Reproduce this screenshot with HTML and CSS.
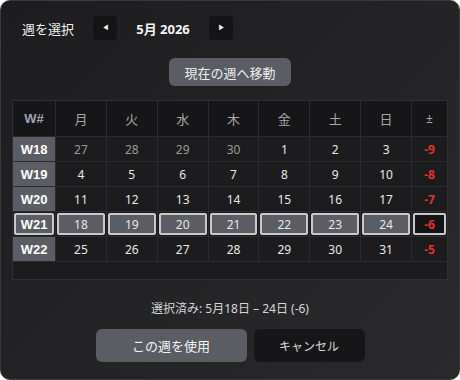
FILE: index.html
```html
<!DOCTYPE html>
<html lang="ja">
<head>
    <meta charset="UTF-8">
    <title>週を選択</title>
    <link rel="stylesheet" href="styles.css">
</head>
<body>
    <div class="panel">
        <div class="header">
            <span class="title">週を選択</span>
            <button class="nav-btn">&#9664;</button>
            <span class="month">5月 2026</span>
            <button class="nav-btn">&#9654;</button>
        </div>

        <button class="today-btn">現在の週へ移動</button>

        <div class="calendar">
            <div class="grid">
                <div class="cell head wk">W#</div>
                <div class="cell head">月</div>
                <div class="cell head">火</div>
                <div class="cell head">水</div>
                <div class="cell head">木</div>
                <div class="cell head">金</div>
                <div class="cell head">土</div>
                <div class="cell head">日</div>
                <div class="cell head pm">±</div>

                <div class="cell label">W18</div>
                <div class="cell muted">27</div>
                <div class="cell muted">28</div>
                <div class="cell muted">29</div>
                <div class="cell muted">30</div>
                <div class="cell">1</div>
                <div class="cell">2</div>
                <div class="cell">3</div>
                <div class="cell diff">-9</div>

                <div class="cell label">W19</div>
                <div class="cell">4</div>
                <div class="cell">5</div>
                <div class="cell">6</div>
                <div class="cell">7</div>
                <div class="cell">8</div>
                <div class="cell">9</div>
                <div class="cell">10</div>
                <div class="cell diff">-8</div>

                <div class="cell label">W20</div>
                <div class="cell">11</div>
                <div class="cell">12</div>
                <div class="cell">13</div>
                <div class="cell">14</div>
                <div class="cell">15</div>
                <div class="cell">16</div>
                <div class="cell">17</div>
                <div class="cell diff">-7</div>

                <div class="cell label sel"><span>W21</span></div>
                <div class="cell sel"><span>18</span></div>
                <div class="cell sel"><span>19</span></div>
                <div class="cell sel"><span>20</span></div>
                <div class="cell sel"><span>21</span></div>
                <div class="cell sel"><span>22</span></div>
                <div class="cell sel"><span>23</span></div>
                <div class="cell sel"><span>24</span></div>
                <div class="cell diff sel dark"><span>-6</span></div>

                <div class="cell label">W22</div>
                <div class="cell">25</div>
                <div class="cell">26</div>
                <div class="cell">27</div>
                <div class="cell">28</div>
                <div class="cell">29</div>
                <div class="cell">30</div>
                <div class="cell">31</div>
                <div class="cell diff">-5</div>
            </div>
        </div>

        <div class="summary">選択済み: 5月18日 – 24日 (-6)</div>

        <div class="actions">
            <button class="btn primary">この週を使用</button>
            <button class="btn cancel">キャンセル</button>
        </div>
    </div>
</body>
</html>
```

FILE: styles.css
```css
body {
    margin: 0;
    padding: 0;
    background-color: #ffffff;
    font-family: "Noto Sans", "Noto Sans CJK JP", sans-serif;
    color: #e6e6e6;
}

.panel {
    box-sizing: border-box;
    width: 460px;
    height: 380px;
    border: 1px solid #3a3a3d;
    border-radius: 10px;
    background: linear-gradient(135deg, #1d1d1f 0%, #242426 55%, #2a2a2c 100%);
    display: flex;
    flex-direction: column;
    align-items: center;
    padding: 15px 11px 0;
}

.header {
    align-self: flex-start;
    display: flex;
    align-items: center;
    height: 24px;
    padding-left: 10px;
}

.title {
    font-size: 13px;
    width: 71px;
    color: #f0f0f0;
}

.nav-btn {
    width: 24px;
    height: 24px;
    border: none;
    border-radius: 4px;
    background-color: #141416;
    color: #f0f0f0;
    font-size: 7px;
    padding: 0;
    cursor: pointer;
}

.month {
    width: 92px;
    text-align: center;
    font-size: 13px;
    font-weight: bold;
    color: #f4f4f4;
}

.today-btn {
    margin-top: 18px;
    height: 28px;
    padding: 0 15px;
    border: none;
    border-radius: 6px;
    background-color: #5b5d65;
    color: #ececec;
    font-family: "Noto Sans CJK JP", sans-serif;
    font-size: 13px;
}

.calendar {
    align-self: stretch;
    margin-top: 14px;
    border: 1px solid #303033;
    background-color: #1c1c1e;
    padding-bottom: 17px;
}

.grid {
    display: grid;
    grid-template-columns: 42px repeat(7, 1fr) 35px;
    grid-template-rows: 35px repeat(5, 24px);
    gap: 1px;
    background-color: #2b2b2e;
    border-bottom: 1px solid #2b2b2e;
}

.cell {
    display: flex;
    align-items: center;
    justify-content: center;
    background-color: #1c1c1e;
    font-size: 12px;
    color: #e8e8e8;
}

.cell.head {
    background-color: #161618;
    color: #a6a6a6;
    font-family: "Noto Sans CJK JP", sans-serif;
    font-size: 13px;
}

.cell.head.wk {
    font-family: "Liberation Sans", sans-serif;
    font-weight: bold;
    color: #9ea3b0;
    font-size: 13px;
}

.cell.head.pm {
    font-family: "Noto Sans", sans-serif;
    font-size: 12px;
}

.cell.label {
    background-color: #5b5d65;
    color: #ffffff;
    font-family: "Liberation Sans", sans-serif;
    font-weight: bold;
    font-size: 13px;
}

.cell.muted {
    color: #9a9a9a;
}

.cell.diff {
    color: #e0312f;
    font-weight: bold;
}

.cell.sel {
    padding: 1px;
}

.cell.sel span {
    box-sizing: border-box;
    width: 100%;
    height: 100%;
    display: flex;
    align-items: center;
    justify-content: center;
    border: 2px solid #c9c9c9;
    border-radius: 2px;
    background-color: #5b5d65;
}

.cell.label.sel {
    background-color: #1c1c1e;
}

.cell.sel.dark span {
    background-color: #141416;
}

.summary {
    margin-top: 19px;
    font-size: 12px;
    color: #d6d6d6;
}

.actions {
    margin-top: 12px;
    display: flex;
    gap: 7px;
}

.btn {
    height: 33px;
    border: none;
    border-radius: 6px;
    font-family: "Noto Sans CJK JP", sans-serif;
    font-size: 13px;
    cursor: pointer;
}

.btn.primary {
    width: 151px;
    background-color: #5b5d65;
    color: #f4f4f4;
}

.btn.cancel {
    width: 111px;
    background-color: #161618;
    color: #d8d8d8;
    font-size: 12px;
}
```
